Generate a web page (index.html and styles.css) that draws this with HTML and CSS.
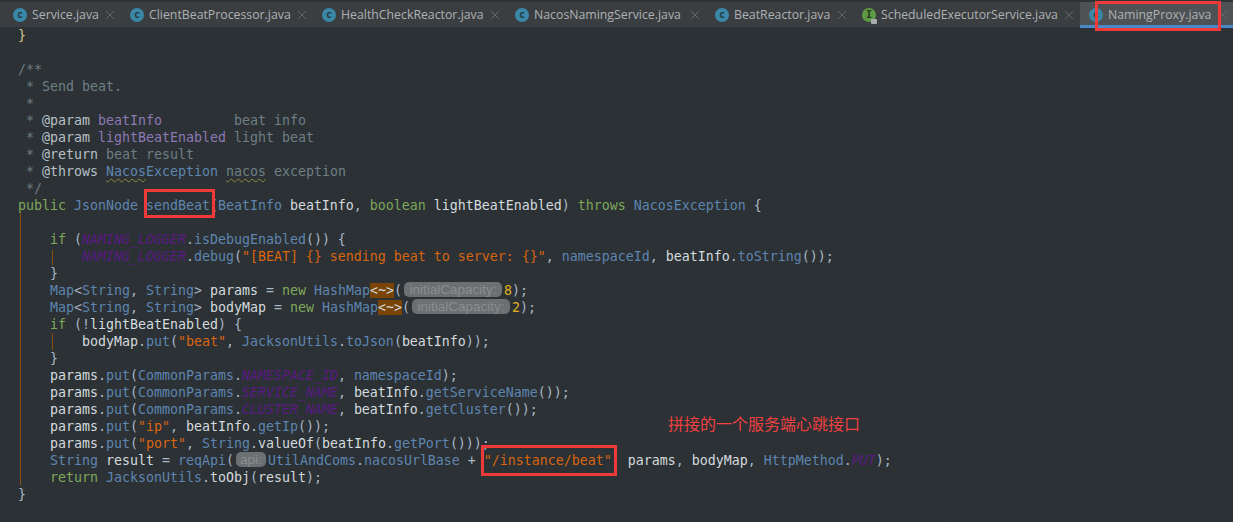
FILE: index.html
```html
<!DOCTYPE html>
<html lang="en">
<head>
<meta charset="utf-8">
<title>NamingProxy.java</title>
<link rel="stylesheet" href="styles.css">
</head>
<body>
<div class="ide">
  <nav class="tabs">
    <div class="tab t1"><span class="ic">c</span><span class="nm">Service.java</span><svg class="x" viewBox="0 0 8 8"><path d="M0 0L8 8M8 0L0 8"/></svg></div>
    <div class="tab t2"><span class="ic">c</span><span class="nm">ClientBeatProcessor.java</span><svg class="x" viewBox="0 0 8 8"><path d="M0 0L8 8M8 0L0 8"/></svg></div>
    <div class="tab t3"><span class="ic">c</span><span class="nm">HealthCheckReactor.java</span><svg class="x" viewBox="0 0 8 8"><path d="M0 0L8 8M8 0L0 8"/></svg></div>
    <div class="tab t4"><span class="ic">c</span><span class="nm">NacosNamingService.java</span><svg class="x" viewBox="0 0 8 8"><path d="M0 0L8 8M8 0L0 8"/></svg></div>
    <div class="tab t5"><span class="ic">c</span><span class="nm">BeatReactor.java</span><svg class="x" viewBox="0 0 8 8"><path d="M0 0L8 8M8 0L0 8"/></svg></div>
    <div class="tab t6"><span class="ic green">I</span><span class="nm">ScheduledExecutorService.java</span><svg class="x" viewBox="0 0 8 8"><path d="M0 0L8 8M8 0L0 8"/></svg></div>
    <div class="tab active"><span class="ic">c</span><span class="nm">NamingProxy.java</span><svg class="x" viewBox="0 0 8 8"><path d="M0 0L8 8M8 0L0 8"/></svg></div>
  </nav>
  <main class="editor">
    <div class="guide g1"></div>
    <div class="guide g2"></div>
    <div class="guide g3"></div>
    <pre class="code"><code><span class="br">}</span>

<span class="dc">/**</span>
<span class="dc"> * Send beat.</span>
<span class="dc"> *</span>
<span class="dc"> * <b class="tag">@param</b> <span class="pv">beatInfo</span>         beat info</span>
<span class="dc"> * <b class="tag">@param</b> <span class="pv">lightBeatEnabled</span> light beat</span>
<span class="dc"> * <b class="tag">@return</b> beat result</span>
<span class="dc"> * <b class="tag">@throws</b> <span class="ty squig">Nacos</span><span class="ty">Exception</span> <span class="squig">nacos</span> exception</span>
<span class="dc"> */</span>
<span class="kw">public</span> <span class="ty">JsonNode</span> <span class="ty">sendBeat</span>(<span class="ty">BeatInfo</span> <span class="id">beatInfo</span>, <span class="kw">boolean</span> <span class="id">lightBeatEnabled</span>) <span class="kw">throws</span> <span class="ty">NacosException</span> {

    <span class="kw">if</span> (<i class="cn">NAMING_LOGGER</i>.<span class="ty">isDebugEnabled</span>()) {
        <i class="cn">NAMING_LOGGER</i>.<span class="ty">debug</span>(<span class="st">"[BEAT] {} sending beat to server: {}"</span>, <span class="ty">namespaceId</span>, <span class="id">beatInfo</span>.<span class="ty">toString</span>());
    }
    <span class="ty">Map</span>&lt;<span class="ty">String</span>, <span class="ty">String</span>&gt; <span class="id">params</span> = <span class="kw">new</span> <span class="ty">HashMap</span><span class="dia">&lt;~&gt;</span>(<span class="hint hc">initialCapacity:</span><span class="nu">8</span>);
    <span class="ty">Map</span>&lt;<span class="ty">String</span>, <span class="ty">String</span>&gt; <span class="id">bodyMap</span> = <span class="kw">new</span> <span class="ty">HashMap</span><span class="dia">&lt;~&gt;</span>(<span class="hint hc">initialCapacity:</span><span class="nu">2</span>);
    <span class="kw">if</span> (!<span class="id">lightBeatEnabled</span>) {
        <span class="id">bodyMap</span>.<span class="ty">put</span>(<span class="st">"beat"</span>, <span class="ty">JacksonUtils</span>.<span class="ty">toJson</span>(<span class="id">beatInfo</span>));
    }
    <span class="id">params</span>.<span class="ty">put</span>(<span class="ty">CommonParams</span>.<i class="cn">NAMESPACE_ID</i>, <span class="ty">namespaceId</span>);
    <span class="id">params</span>.<span class="ty">put</span>(<span class="ty">CommonParams</span>.<i class="cn">SERVICE_NAME</i>, <span class="id">beatInfo</span>.<span class="ty">getServiceName</span>());
    <span class="id">params</span>.<span class="ty">put</span>(<span class="ty">CommonParams</span>.<i class="cn">CLUSTER_NAME</i>, <span class="id">beatInfo</span>.<span class="ty">getCluster</span>());
    <span class="id">params</span>.<span class="ty">put</span>(<span class="st">"ip"</span>, <span class="id">beatInfo</span>.<span class="ty">getIp</span>());
    <span class="id">params</span>.<span class="ty">put</span>(<span class="st">"port"</span>, <span class="ty">String</span>.<span class="id">valueOf</span>(<span class="id">beatInfo</span>.<span class="ty">getPort</span>()));
    <span class="ty">String</span> <span class="id">result</span> = <span class="ty">reqApi</span>(<span class="hint ha">api:</span><span class="ty">UtilAndComs</span>.<span class="ty">nacosUrlBase</span> + <span class="st">"/instance/beat"</span>, <span class="id">params</span>, <span class="id">bodyMap</span>, <span class="ty">HttpMethod</span>.<i class="cn">PUT</i>);
    <span class="kw">return</span> <span class="ty">JacksonUtils</span>.<span class="id">toObj</span>(<span class="id">result</span>);
}</code></pre>
  </main>
  <div class="mark m-tab"></div>
  <div class="mark m-fn"></div>
  <div class="mark m-url"></div>
  <div class="note">拼接的一个服务端心跳接口</div>
</div>
</body>
</html>
```
FILE: styles.css
```css
* { box-sizing: border-box; }
html, body { margin: 0; padding: 0; }
body { background: #2b3135; }
.ide { position: relative; width: 1233px; height: 522px; overflow: hidden; background: #2b3135; }
.tabs { display: flex; align-items: flex-start; height: 27px; padding-left: 4px; background: #3b3e40; border-top: 2px solid #303335; }
.tab { display: flex; align-items: center; flex: none; height: 26px; padding: 0 7px 0 9px; font: 12.3px/26px "Open Sans", "Noto Sans", sans-serif; color: #aeb1b3; white-space: nowrap; }
.t1 { width: 117px; }
.t2 { width: 192px; }
.t3 { width: 193px; }
.t4 { width: 200px; }
.t5 { width: 147px; }
.t6 { width: 227px; }
.active { flex: 1 0 0; padding-right: 6px; background: #4e5254; box-shadow: inset 0 -3px #4a88c7; }
.ic { position: relative; flex: none; width: 14px; height: 14px; margin-right: 5px; border-radius: 50%; background: #3a87a8; color: #263a44; font: bold 10px/13px "DejaVu Sans Mono", monospace; text-align: center; }
.ic.green { background: #5f9a45; color: #26381d; }
.ic.green::after { content: ""; position: absolute; right: -1px; bottom: -2px; width: 6px; height: 5px; border-radius: 1px; background: #a8acae; }
.x { flex: none; width: 8px; height: 8px; margin-left: auto; }
.x path { fill: none; stroke: #64676a; stroke-width: 1; }
.editor { position: relative; height: 495px; background: linear-gradient(#2f3539, #2f3539) 946px 0 / 1px 100% no-repeat; }
.code { margin: 0; padding: 0 0 0 18px; font: 13.29px/17px "DejaVu Sans Mono", monospace; color: #a9b7c6; white-space: pre; }
.code code { font: inherit; }
.br { color: #d4c98a; }
.dc { color: #6f7f84; }
.tag { font-weight: normal; color: #b7c0c6; }
.pv { color: #8f78b4; }
.ty { color: #5f85b0; }
.id { color: #d4dade; }
.kw { color: #7fa85a; }
.st { color: #d9650f; }
.nu { color: #e0b020; }
.cn { color: #5a1a82; }
.dia { background: #7a4406; color: #d4dade; }
.squig { text-decoration: underline wavy #8f8a3c 1px; text-underline-offset: 2px; }
.hint { display: inline-block; height: 15px; margin: 0 2px; border-radius: 5px; background: #6d7072; color: #8a8d8f; font: 13.5px/15px "Liberation Sans", sans-serif; vertical-align: -2px; text-align: center; overflow: hidden; }
.hc { width: 98px; }
.ha { width: 30px; }
.guide { position: absolute; width: 1px; background: #8a4f10; }
.g1 { left: 20px; top: 186px; height: 272px; }
.g2 { left: 52px; top: 223px; height: 15px; }
.g3 { left: 52px; top: 306px; height: 17px; }
.mark { position: absolute; border: 3px solid #f03a3a; }
.m-tab { left: 1095px; top: 1px; width: 126px; height: 30px; }
.m-fn { left: 144px; top: 189px; width: 71px; height: 29px; }
.m-url { left: 481px; top: 445px; width: 136px; height: 31px; }
.note { position: absolute; left: 668px; top: 412px; color: #f04040; font: 16px/22px "Noto Sans CJK SC", sans-serif; }
```
